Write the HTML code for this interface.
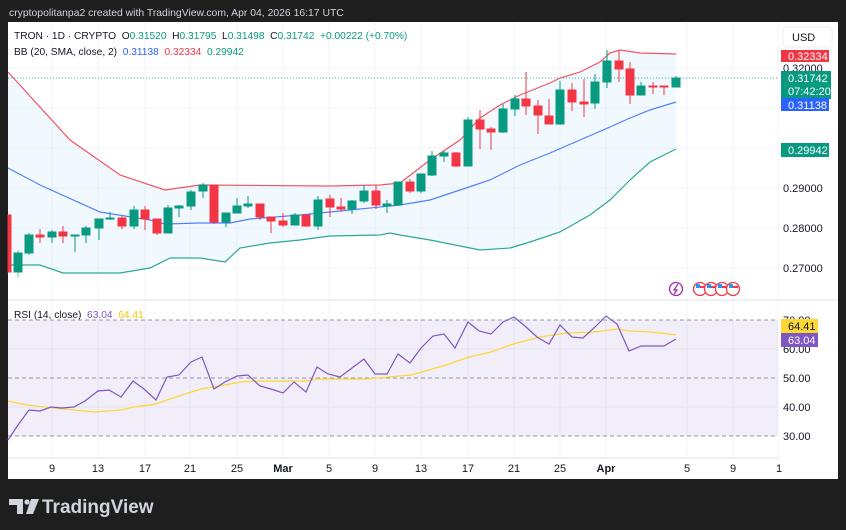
<!DOCTYPE html>
<html><head><meta charset="utf-8"><style>
html,body{margin:0;padding:0;background:#1e1e1e;width:846px;height:530px;overflow:hidden;font-family:"Liberation Sans",sans-serif}
svg{display:block}
text{font-family:"Liberation Sans",sans-serif}
</style></head><body>
<svg width="846" height="530" xmlns="http://www.w3.org/2000/svg">
<rect width="846" height="530" fill="#1e1e1e"/>
<text x="9" y="16" font-size="10.4" fill="#d1d4dc">cryptopolitanpa2 created with TradingView.com, Apr 04, 2026 16:17 UTC</text>
<rect x="8" y="22" width="830" height="457" fill="#fff"/>
<!-- grid -->
<g stroke="#f0f3fa" stroke-width="1">
<line x1="52" y1="22" x2="52" y2="458"/><line x1="98" y1="22" x2="98" y2="458"/><line x1="145" y1="22" x2="145" y2="458"/><line x1="190" y1="22" x2="190" y2="458"/><line x1="237" y1="22" x2="237" y2="458"/><line x1="283" y1="22" x2="283" y2="458"/><line x1="329" y1="22" x2="329" y2="458"/><line x1="375" y1="22" x2="375" y2="458"/><line x1="421" y1="22" x2="421" y2="458"/><line x1="468" y1="22" x2="468" y2="458"/><line x1="514" y1="22" x2="514" y2="458"/><line x1="560" y1="22" x2="560" y2="458"/><line x1="606" y1="22" x2="606" y2="458"/><line x1="687" y1="22" x2="687" y2="458"/><line x1="733" y1="22" x2="733" y2="458"/>
<line x1="8" y1="68" x2="778" y2="68"/><line x1="8" y1="108" x2="778" y2="108"/><line x1="8" y1="148" x2="778" y2="148"/><line x1="8" y1="188" x2="778" y2="188"/><line x1="8" y1="228" x2="778" y2="228"/><line x1="8" y1="268" x2="778" y2="268"/>
<line x1="8" y1="349" x2="778" y2="349"/><line x1="8" y1="407" x2="778" y2="407"/>
</g>
<line x1="8" y1="300" x2="838" y2="300" stroke="#e0e3eb"/>
<line x1="778" y1="22" x2="778" y2="479" stroke="#f0f3fa"/>
<!-- BB fill -->
<polygon fill="#2196f3" fill-opacity="0.06" points="8,72 70,140 120,175 165,190 200,185 330,186 380,185 400,183 430,160 460,140 480,118 500,105 520,95 550,83 560,78 580,72 600,62 610,53 620,50 640,53 676,54 676,149 650,162 630,180 610,200 590,215 560,232 530,242 510,248 480,250 460,246 430,240 400,235 390,233 380,235 330,236 300,240 270,243 240,248 225,262 200,258 170,258 150,268 120,273 63,273 40,265 8,265"/>
<polyline fill="none" stroke="#f23645" stroke-opacity="0.85" stroke-width="1.2" points="8,72 70,140 120,175 165,190 200,185 330,186 380,185 400,183 430,160 460,140 480,118 500,105 520,95 550,83 560,78 580,72 600,62 610,53 620,50 640,53 676,54"/>
<polyline fill="none" stroke="#2962ff" stroke-opacity="0.8" stroke-width="1.2" points="8,168 40,185 100,212 150,220 165,224 200,223 230,223 250,219 300,215 350,210 400,205 430,200 460,190 490,180 520,165 550,153 580,140 610,127 630,118 650,110 676,102"/>
<polyline fill="none" stroke="#089981" stroke-opacity="0.85" stroke-width="1.2" points="8,265 40,265 63,273 120,273 150,268 170,258 200,258 225,262 240,248 270,243 300,240 330,236 380,235 390,233 400,235 430,240 460,246 480,250 510,248 530,242 560,232 590,215 610,200 630,180 650,162 676,149"/>
<line x1="8" y1="78" x2="778" y2="78" stroke="#089981" stroke-dasharray="1,2" stroke-opacity="0.8"/>
<!-- candles -->
<g fill="#f23645" stroke="#f23645"><rect x="8" y="215" width="3" height="57"/></g>
<g fill="#089981" stroke="#089981">
<line x1="18" y1="250" x2="18" y2="277" stroke-opacity=".6"/><rect x="14" y="253" width="8" height="19"/>
<line x1="29" y1="233" x2="29" y2="255"/><rect x="25" y="235" width="8" height="18"/>
<line x1="52" y1="230" x2="52" y2="243"/><rect x="48" y="232" width="8" height="5"/>
<line x1="75" y1="235" x2="75" y2="252"/><rect x="71" y="235" width="8" height="1"/>
<line x1="86" y1="226" x2="86" y2="243"/><rect x="82" y="228" width="8" height="7"/>
<line x1="99" y1="219" x2="99" y2="240"/><rect x="95" y="219" width="8" height="9"/>
<line x1="110" y1="212" x2="110" y2="220"/><rect x="106" y="218" width="8" height="1"/>
<line x1="134" y1="206" x2="134" y2="229"/><rect x="130" y="210" width="8" height="16"/>
<line x1="168" y1="205" x2="168" y2="233"/><rect x="164" y="208" width="8" height="25"/>
<line x1="179" y1="205" x2="179" y2="217"/><rect x="175" y="206" width="8" height="2"/>
<line x1="191" y1="190" x2="191" y2="210"/><rect x="187" y="192" width="8" height="14"/>
<line x1="203" y1="183" x2="203" y2="198"/><rect x="199" y="185" width="8" height="6"/>
<line x1="226" y1="213" x2="226" y2="227"/><rect x="222" y="213" width="8" height="9"/>
<line x1="237" y1="198" x2="237" y2="213"/><rect x="233" y="206" width="8" height="7"/>
<line x1="248" y1="196" x2="248" y2="208"/><rect x="244" y="204" width="8" height="2"/>
<line x1="295" y1="213" x2="295" y2="225"/><rect x="291" y="215" width="8" height="10"/>
<line x1="318" y1="196" x2="318" y2="230"/><rect x="314" y="200" width="8" height="26"/>
<line x1="352" y1="200" x2="352" y2="214"/><rect x="348" y="201" width="8" height="8"/>
<line x1="364" y1="185" x2="364" y2="203"/><rect x="360" y="191" width="8" height="10"/>
<line x1="387" y1="200" x2="387" y2="213"/><rect x="383" y="204" width="8" height="2"/>
<line x1="398" y1="182" x2="398" y2="206"/><rect x="394" y="182" width="8" height="23"/>
<line x1="421" y1="174" x2="421" y2="193"/><rect x="417" y="174" width="8" height="17"/>
<line x1="432" y1="151" x2="432" y2="176"/><rect x="428" y="156" width="8" height="19"/>
<line x1="444" y1="151" x2="444" y2="162"/><rect x="440" y="153" width="8" height="3"/>
<line x1="468" y1="117" x2="468" y2="166"/><rect x="464" y="120" width="8" height="46"/>
<line x1="503" y1="104" x2="503" y2="133"/><rect x="499" y="109" width="8" height="23"/>
<line x1="515" y1="95" x2="515" y2="116"/><rect x="511" y="99" width="8" height="10"/>
<line x1="560" y1="81" x2="560" y2="125"/><rect x="556" y="90" width="8" height="34"/>
<line x1="595" y1="74" x2="595" y2="109"/><rect x="591" y="82" width="8" height="21"/>
<line x1="607" y1="50" x2="607" y2="88"/><rect x="603" y="61" width="8" height="21"/>
<line x1="641" y1="82" x2="641" y2="95"/><rect x="637" y="86" width="8" height="9"/>
<line x1="676" y1="76" x2="676" y2="87"/><rect x="672" y="78" width="8" height="9"/>
</g>
<g fill="#f23645" stroke="#f23645">
<line x1="40" y1="229" x2="40" y2="243"/><rect x="36" y="235" width="8" height="2"/>
<line x1="63" y1="226" x2="63" y2="243"/><rect x="59" y="232" width="8" height="4"/>
<line x1="122" y1="216" x2="122" y2="229"/><rect x="118" y="218" width="8" height="8"/>
<line x1="145" y1="206" x2="145" y2="230"/><rect x="141" y="210" width="8" height="9"/>
<line x1="157" y1="219" x2="157" y2="235"/><rect x="153" y="219" width="8" height="14"/>
<line x1="214" y1="185" x2="214" y2="224"/><rect x="210" y="185" width="8" height="37"/>
<line x1="260" y1="204" x2="260" y2="220"/><rect x="256" y="204" width="8" height="13"/>
<line x1="271" y1="217" x2="271" y2="233"/><rect x="267" y="217" width="8" height="4"/>
<line x1="283" y1="213" x2="283" y2="227"/><rect x="279" y="221" width="8" height="4"/>
<line x1="306" y1="215" x2="306" y2="227"/><rect x="302" y="215" width="8" height="11"/>
<line x1="330" y1="195" x2="330" y2="217"/><rect x="326" y="199" width="8" height="8"/>
<line x1="341" y1="198" x2="341" y2="212"/><rect x="337" y="207" width="8" height="2"/>
<line x1="376" y1="185" x2="376" y2="209"/><rect x="372" y="191" width="8" height="14"/>
<line x1="410" y1="179" x2="410" y2="193"/><rect x="406" y="182" width="8" height="9"/>
<line x1="456" y1="152" x2="456" y2="167"/><rect x="452" y="153" width="8" height="13"/>
<line x1="480" y1="110" x2="480" y2="149"/><rect x="476" y="120" width="8" height="9"/>
<line x1="491" y1="127" x2="491" y2="150"/><rect x="487" y="129" width="8" height="3"/>
<line x1="526" y1="72" x2="526" y2="115"/><rect x="522" y="99" width="8" height="7"/>
<line x1="538" y1="100" x2="538" y2="134"/><rect x="534" y="106" width="8" height="9"/>
<line x1="549" y1="99" x2="549" y2="124"/><rect x="545" y="116" width="8" height="8"/>
<line x1="572" y1="83" x2="572" y2="111"/><rect x="568" y="90" width="8" height="12"/>
<line x1="584" y1="79" x2="584" y2="117"/><rect x="580" y="102" width="8" height="2"/>
<line x1="619" y1="50" x2="619" y2="82"/><rect x="615" y="61" width="8" height="8"/>
<line x1="630" y1="62" x2="630" y2="104"/><rect x="626" y="69" width="8" height="26"/>
<line x1="653" y1="82" x2="653" y2="94"/><rect x="649" y="86" width="8" height="1"/>
<line x1="664" y1="86" x2="664" y2="95"/><rect x="660" y="86" width="8" height="1"/>
</g>
<!-- legend -->
<g font-size="10.2">
<text x="14" y="39" fill="#131722" xml:space="preserve">TRON · 1D · CRYPTO  O<tspan fill="#089981">0.31520</tspan>  H<tspan fill="#089981">0.31795</tspan>  L<tspan fill="#089981">0.31498</tspan>  C<tspan fill="#089981">0.31742</tspan>  <tspan fill="#089981">+0.00222 (+0.70%)</tspan></text>
<text x="14" y="55" fill="#131722" xml:space="preserve">BB (20, SMA, close, 2)  <tspan fill="#2962ff">0.31138</tspan>  <tspan fill="#f23645">0.32334</tspan>  <tspan fill="#089981">0.29942</tspan></text>
<text x="14" y="318" fill="#131722" xml:space="preserve">RSI (14, close)  <tspan fill="#7e57c2">63.04</tspan>  <tspan fill="#f7c600">64.41</tspan></text>
</g>
<!-- events -->
<circle cx="676" cy="289" r="6.5" fill="#fff" stroke="#9c27b0" stroke-width="1.3"/>
<path d="M678,284 L674,290 L677,290 L674,294" stroke="#9c27b0" fill="none" stroke-width="1.2"/>
<g stroke="#f23645" stroke-width="1.3" fill="#fff">
<circle cx="700" cy="289" r="6.5"/><circle cx="711" cy="289" r="6.5"/><circle cx="722" cy="289" r="6.5"/><circle cx="733" cy="289" r="6.5"/>
</g>
<g><rect x="697" y="286" width="8" height="2" fill="#f23645"/><rect x="708" y="286" width="8" height="2" fill="#f23645"/><rect x="719" y="286" width="8" height="2" fill="#f23645"/><rect x="730" y="286" width="8" height="2" fill="#f23645"/>
<rect x="696" y="284" width="4" height="4" fill="#2196f3"/><rect x="707" y="284" width="4" height="4" fill="#2196f3"/><rect x="718" y="284" width="4" height="4" fill="#2196f3"/><rect x="729" y="284" width="4" height="4" fill="#2196f3"/></g>
<!-- RSI -->
<rect x="8" y="320" width="770" height="116" fill="#7e57c2" fill-opacity="0.1"/>
<g stroke="#9598a1" stroke-dasharray="4,3"><line x1="8" y1="320" x2="778" y2="320"/><line x1="8" y1="378" x2="778" y2="378"/><line x1="8" y1="436" x2="778" y2="436"/></g>
<polyline fill="none" stroke="#fdd835" stroke-width="1.2" points="8,401 27,405 54,408 94,412 121,410 134,407 156,404 170,399 201,389 214,387 241,382 259,381 308,381 317,379 366,379 411,375 429,370 446,365 469,357 491,352 513,344 540,337 567,333 594,332 618,329 629,331 652,332 676,335"/>
<polyline fill="none" stroke="#7e57c2" stroke-width="1.2" points="8,440 18,425 29,410 40,411 51,407 62,408 74,407 85,401 98,391 109,390 121,397 133,381 144,389 156,400 167,377 179,375 191,362 202,357 214,389 225,382 237,376 248,375 260,386 271,389 283,393 294,382 306,392 317,367 328,374 340,377 352,368 364,359 375,374 387,374 398,354 410,363 421,348 433,336 444,334 455,348 468,322 479,331 491,334 503,322 514,317 526,327 537,337 549,344 560,325 572,337 583,338 595,327 606,316 617,324 629,351 641,346 653,346 664,346 676,339"/>
<!-- axes -->
<line x1="8" y1="458" x2="778" y2="458" stroke="#e0e3eb"/>
<g font-size="11" fill="#131722">
<text x="783" y="72">0.32000</text><text x="783" y="192">0.29000</text><text x="783" y="232">0.28000</text><text x="783" y="272">0.27000</text>
<text x="783" y="324">70.00</text><text x="783" y="353">60.00</text><text x="783" y="382">50.00</text><text x="783" y="411">40.00</text><text x="783" y="440">30.00</text>
</g>
<rect x="783" y="27" width="49" height="20" rx="3" fill="#fff" stroke="#eceef2"/>
<text x="792" y="41" font-size="11" fill="#131722">USD</text>
<g font-size="11" fill="#fff">
<rect x="781" y="50" width="48" height="12" fill="#f23645"/><text x="788" y="60">0.32334</text>
<rect x="781" y="71" width="50" height="28" fill="#089981"/><text x="788" y="82">0.31742</text><text x="788" y="95">07:42:20</text>
<rect x="781" y="98" width="48" height="13" fill="#2962ff"/><text x="788" y="109">0.31138</text>
<rect x="781" y="143" width="48" height="14" fill="#089981"/><text x="788" y="154">0.29942</text>
<rect x="781" y="319" width="37" height="14" fill="#fdd835"/><text x="788" y="330" fill="#131722">64.41</text>
<rect x="781" y="333" width="37" height="14" fill="#7e57c2"/><text x="788" y="344">63.04</text>
</g>
<g font-size="11" fill="#131722" text-anchor="middle">
<text x="52" y="472">9</text><text x="98" y="472">13</text><text x="145" y="472">17</text><text x="190" y="472">21</text><text x="237" y="472">25</text><text x="283" y="472" font-weight="bold">Mar</text><text x="329" y="472">5</text><text x="375" y="472">9</text><text x="421" y="472">13</text><text x="468" y="472">17</text><text x="514" y="472">21</text><text x="560" y="472">25</text><text x="606" y="472" font-weight="bold">Apr</text><text x="687" y="472">5</text><text x="733" y="472">9</text>
</g>
<text x="776" y="472" font-size="11" fill="#131722">1</text>
<!-- logo -->
<g fill="#d1d4dc">
<path d="M9,499 H23 V514 H17 V505 H9 Z"/>
<circle cx="27" cy="502" r="2.6"/>
<path d="M31,499 H39 L33,514 H26 Z"/>
</g>
<text x="42" y="513" font-size="19" font-weight="bold" fill="#d1d4dc">TradingView</text>
</svg>
</body></html>
